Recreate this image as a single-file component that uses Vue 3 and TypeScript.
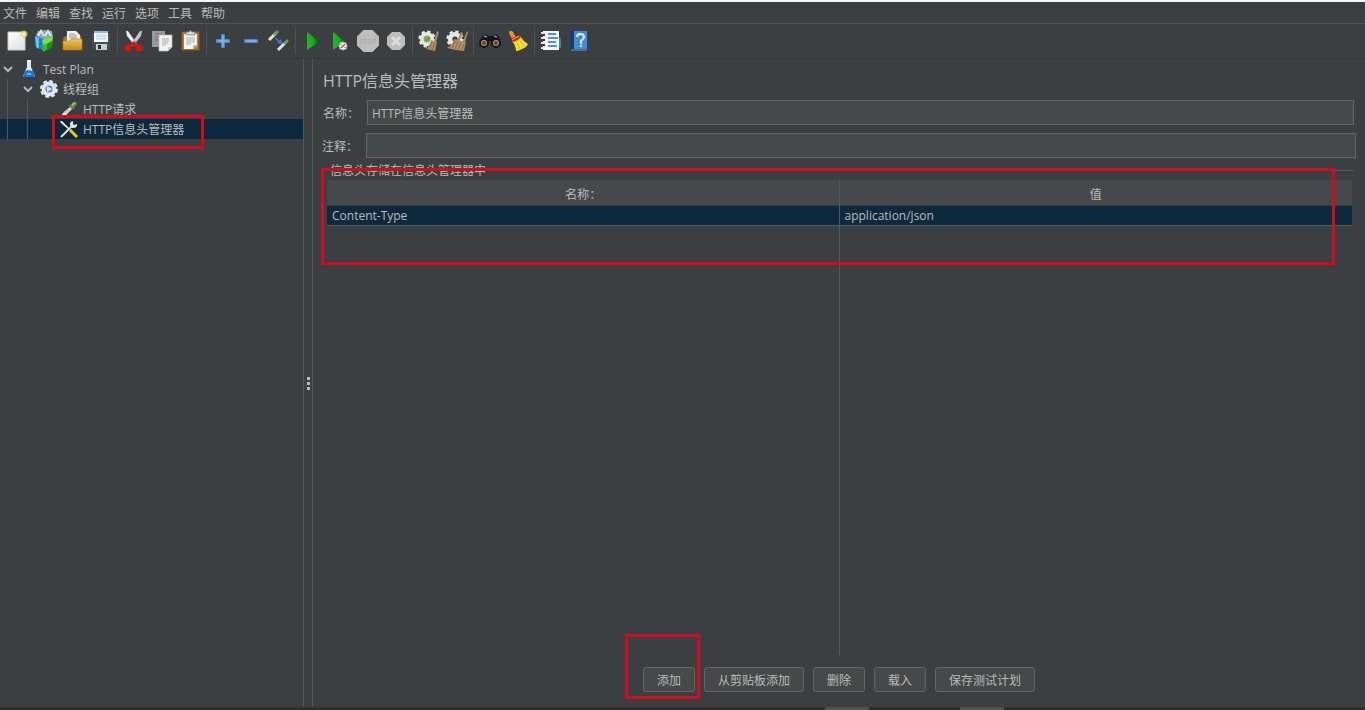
<script setup lang="ts">
import { ref } from 'vue'

interface Tool {
  icon: string
  label: string
  caption?: string
}

interface Header {
  name: string
  value: string
}

const menus: string[] = ['文件', '编辑', '查找', '运行', '选项', '工具', '帮助']

const toolGroups: Tool[][] = [
  [
    { icon: 'new', label: '新建' },
    { icon: 'templates', label: '模板' },
    { icon: 'open', label: '打开' },
    { icon: 'save', label: '保存' },
  ],
  [
    { icon: 'cut', label: '剪切' },
    { icon: 'copy', label: '复制' },
    { icon: 'paste', label: '粘贴' },
  ],
  [
    { icon: 'plus', label: '展开' },
    { icon: 'minus', label: '折叠' },
    { icon: 'toggle', label: '切换' },
  ],
  [
    { icon: 'start', label: '启动' },
    { icon: 'start-now', label: '不停顿开始' },
    { icon: 'stop', label: '停止', caption: 'STOP' },
    { icon: 'shutdown', label: '关闭' },
  ],
  [
    { icon: 'clear', label: '清除' },
    { icon: 'clear-all', label: '清除全部' },
  ],
  [
    { icon: 'search', label: '查找' },
    { icon: 'reset', label: '重置查找' },
  ],
  [
    { icon: 'functions', label: '函数助手' },
    { icon: 'help', label: '帮助' },
  ],
]

const title = 'HTTP信息头管理器'
const name = ref(title)
const comment = ref('')
const headers = ref<Header[]>([{ name: 'Content-Type', value: 'application/json' }])
const actions: string[] = ['从剪贴板添加', '删除', '载入', '保存测试计划']
</script>

<template>
  <div class="app">
    <svg class="defs" aria-hidden="true">
      <defs>
        <linearGradient id="gGreen" x1="0" y1="0" x2="1" y2="0">
          <stop offset="0" stop-color="#2fae2f" /><stop offset=".5" stop-color="#12b312" /><stop offset="1" stop-color="#075f0a" />
        </linearGradient>
        <linearGradient id="gFolder" x1="0" y1="0" x2="0" y2="1">
          <stop offset="0" stop-color="#f2c45a" /><stop offset="1" stop-color="#c98a16" />
        </linearGradient>
        <linearGradient id="gPaper" x1="0" y1="0" x2="1" y2="1">
          <stop offset="0" stop-color="#fff" /><stop offset="1" stop-color="#dcdcdc" />
        </linearGradient>
      </defs>
      <symbol id="i-new" viewBox="0 0 24 24">
        <path d="M3 3h17v18H3z" fill="url(#gPaper)" stroke="#c9c9c5" />
        <circle cx="19" cy="5" r="3.500" fill="#e8d56b" opacity=".75" />
        <circle cx="19" cy="5" r="1.500" fill="#fffbd0" />
      </symbol>
      <symbol id="i-templates" viewBox="0 0 24 24">
        <path d="M3 6l2-4 5-1 9 1 1 6-9 4z" fill="#8fa9a8" />
        <path d="M5 7l3-5 3 5M12 7l3-5 3 5" fill="none" stroke="#dbe9ec" stroke-width="2" />
        <path d="M2 7l9 3v12l-8-4z" fill="#1687d8" /><path d="M2 7l4 1.500v11.500l-3-2z" fill="#55c5f5" />
        <path d="M7 10v10" stroke="#0b5da5" stroke-dasharray="2 2" />
        <path d="M9 11l11-3-1 10-9 5z" fill="#36bd20" /><path d="M9 11l11-3-1 4-8 4z" fill="#7fe04a" /><path d="M14 15l5-3v6l-5 4z" fill="#159415" />
      </symbol>
      <symbol id="i-open" viewBox="0 0 24 24">
        <path d="M2 9l3-2h15l1 4v8H3z" fill="#b17a17" />
        <path d="M6 2h9l4 4v8H6z" fill="#f5f5f5" /><path d="M8 5h6M8 7h8M8 9h8" stroke="#929292" />
        <path d="M2 12h7l2-2h10v10q0 1-1 1H3q-1 0-1-1z" fill="url(#gFolder)" stroke="#b87b12" stroke-width=".6" />
      </symbol>
      <symbol id="i-save" viewBox="0 0 24 24">
        <path d="M3 4h18v17H5l-2-2z" fill="#454c53" /><path d="M5 2h14v11H5z" fill="#f5f9fc" />
        <path d="M5 2h14v2H5z" fill="#8ebbdb" /><path d="M7 6h10M7 8h10M7 10h10" stroke="#b5cde0" />
        <path d="M7 15h11v6H7z" fill="#c9ced2" /><path d="M9 16h3v4H9z" fill="#252b30" />
      </symbol>
      <symbol id="i-cut" viewBox="0 0 24 24">
        <path d="M4 2q2-1 4 3l7 10-2 2L5 7z" fill="#f0f0f0" /><path d="M20 2q-2-1-4 3L9 15l2 2 8-10z" fill="#c4c4c4" />
        <g fill="none" stroke="#d81313" stroke-width="3"><circle cx="6" cy="19" r="2" /><circle cx="17" cy="19" r="2" /><path d="M8 17l4-3 3 3" /></g>
      </symbol>
      <symbol id="i-copy" viewBox="0 0 24 24">
        <path d="M2 2h13v16H2z" fill="#999" /><path d="M5 5h7M5 8h5M5 11h4" stroke="#747474" />
        <path d="M9 6h13v12l-4 4H9z" fill="#f1f1f1" stroke="#bbb" stroke-width=".7" />
        <path d="M12 10h7M12 12h7M12 14h6M12 16h4" stroke="#aaa" /><path d="M18 22v-4h4z" fill="#c7c7c7" />
      </symbol>
      <symbol id="i-paste" viewBox="0 0 24 24">
        <path d="M4 3h17v18H4z" fill="#b57a26" stroke="#8d5912" /><path d="M6 5h13v11l-4 4H6z" fill="#f7f7f7" />
        <path d="M8 9h9M8 11h9M8 13h9M8 15h5" stroke="#a8a8a8" /><path d="M8 3h3q1-3 3 0h3v3H8z" fill="#d5d7d2" stroke="#737872" stroke-width=".7" />
        <path d="M15 20v-4h4z" fill="#bcbcbc" />
      </symbol>
      <symbol id="i-plus" viewBox="0 0 24 24">
        <path d="M11 6h2v5h5v2h-5v5h-2v-5H6v-2h5z" fill="#c2dcfb" stroke="#5f9be2" stroke-width="1.500" />
      </symbol>
      <symbol id="i-minus" viewBox="0 0 24 24"><path d="M6 11h12v2H6z" fill="#c2dcfb" stroke="#5f9be2" stroke-width="1.500" /></symbol>
      <symbol id="i-toggle" viewBox="0 0 24 24">
        <path d="M2 11l7-7" stroke="#e2e2dc" stroke-width="3" /><path d="M7 6l4-4" stroke="#6da04d" stroke-width="3" />
        <path d="M11 21l7-7" stroke="#e2e2dc" stroke-width="3" /><path d="M17 15l4-4" stroke="#6da04d" stroke-width="3" />
        <path d="M8 9l5 4" stroke="#3d7fd0" stroke-width="1.500" /><path d="M15 15l-5-1 4-4z" fill="#3d7fd0" />
      </symbol>
      <symbol id="i-start" viewBox="0 0 24 24"><path d="M7 3l12 10L7 21z" fill="url(#gGreen)" /></symbol>
      <symbol id="i-start-now" viewBox="0 0 24 24">
        <path d="M5 3l12 10L5 21z" fill="url(#gGreen)" />
        <circle cx="15" cy="17" r="4" fill="#f5f6fa" stroke="#9eacc4" /><path d="M13 19l4-4" stroke="#d33d32" stroke-width="1.500" /><path d="M13 15v1M17 18v1" stroke="#345b9b" />
      </symbol>
      <symbol id="i-stop" viewBox="0 0 24 24">
        <path d="M7.500 1h9L23 7.500v9L16.500 23h-9L1 16.500v-9z" fill="#bdbdbd" />
      </symbol>
      <symbol id="i-shutdown" viewBox="0 0 24 24">
        <path d="M8 3h8l5 5v8l-5 5H8l-5-5V8z" fill="#bdbdbd" /><path d="M8 8l8 8M16 8l-8 8" stroke="#dedede" stroke-width="3" />
      </symbol>
      <symbol id="i-gear" viewBox="0 0 24 24">
        <circle cx="12" cy="12" r="10" fill="none" stroke="#e5e7e4" stroke-width="3" stroke-dasharray="4.500 3.354" />
        <circle cx="12" cy="12" r="6.500" fill="none" stroke="#e5e7e4" stroke-width="6" />
      </symbol>
      <symbol id="i-clear" viewBox="0 0 24 24">
        <use href="#i-gear" x="1" y="1" width="18" height="18" /><circle cx="10" cy="10" r="3.500" fill="#7fae5a" /><path d="M9 12q1-3 4-3" fill="none" stroke="#4f8a2c" />
        <path d="M20 2l2 1-3 10-2-1z" fill="#a98b65" /><path d="M14 11l6 2-2 9-9-2q4-3 5-9z" fill="#b08e64" />
        <path d="M15 13l-3 7M18 14l-3 7" stroke="#8a6c48" />
      </symbol>
      <symbol id="i-clear-all" viewBox="0 0 24 24">
        <use href="#i-gear" x="1" y="1" width="18" height="18" />
        <path d="M16 3l2 1-4 9-2-1zM22 2l1 1-3 10-2-1z" fill="#a98b65" />
        <path d="M9 10l12 3-2 9-8-1-9-2q6-3 7-9z" fill="#b08e64" />
        <path d="M10 12l-3 7M13 13l-3 7M16 14l-3 7M19 15l-2 6" stroke="#8a6c48" />
      </symbol>
      <symbol id="i-search" viewBox="0 0 24 24">
        <path d="M4 8l3-3 4 2h3l4-2 3 3 2 8h-7l-2-4h-4l-2 4H1z" fill="#11161b" /><path d="M6 7l3 1M16 7l3 1" stroke="#8796a4" stroke-width="1.500" />
        <circle cx="6" cy="14" r="4" fill="#8f7767" stroke="#151515" stroke-width="2" /><circle cx="18" cy="14" r="4" fill="#8f7767" stroke="#151515" stroke-width="2" />
        <circle cx="6" cy="14" r="2.500" fill="#4a4a50" stroke="#c08a5a" /><circle cx="18" cy="14" r="2.500" fill="#4a4a50" stroke="#c08a5a" />
      </symbol>
      <symbol id="i-reset" viewBox="0 0 24 24">
        <path d="M3 4q0-3 3-2 2 1 2 3l2 3-4 2z" fill="#d99724" /><path d="M6 12q5 0 8-5 3 5 8 8-2 4-6 5-3 2-6 2 0-5-4-10z" fill="#f3dd35" />
        <path d="M5 10l7-4 3 2q-3 4-8 5z" fill="#ce241c" /><path d="M6 11l7-4" stroke="#f0b45a" /><path d="M11 14l3 6M14 12l5 6" stroke="#d6b51c" />
      </symbol>
      <symbol id="i-functions" viewBox="0 0 24 24">
        <path d="M20 9h2v10h-2z" fill="#287eae" /><path d="M20 12h2v5h-2z" fill="#32a252" />
        <path d="M4 2h16v19H4z" fill="#f7f8fa" /><path d="M9 5h8M9 9h10M9 13h8M9 17h9" stroke="#5b91d8" stroke-width="2" />
        <path d="M2 4h4M2 9h4M2 14h4M2 19h4" stroke="#e5e5e5" stroke-width="2" /><path d="M4 6h2M4 11h2M4 16h2" stroke="#343434" stroke-width="2" />
      </symbol>
      <symbol id="i-help" viewBox="0 0 24 24">
        <path d="M3 2h17v20H3z" fill="#173a66" /><path d="M7 2h13v18H7z" fill="#4389dc" /><path d="M4 21h16" stroke="#7da5cf" />
        <path d="M10 8q0-3 3-3 4 0 4 3 0 2-3 4v3" fill="none" stroke="#e8f1fb" stroke-width="2" /><path d="M13 16h2v2h-2z" fill="#e8f1fb" />
      </symbol>
      <symbol id="i-flask" viewBox="0 0 20 20">
        <path d="M8 2h4v6l4 9q0 1-1 1H5q-1 0-1-1l4-9z" fill="#d9e8f4" /><path d="M6 12l3-1 5 1 2 5q0 1-1 1H5q-1 0-1-1z" fill="#1d75d8" /><path d="M8 2h4" stroke="#eff7fc" stroke-width="2" /><path d="M8 14h4v2H8z" fill="#65b9fa" />
      </symbol>
      <symbol id="i-threads" viewBox="0 0 20 20">
        <circle cx="10" cy="10" r="8" fill="none" stroke="#dfe6f0" stroke-width="2" stroke-dasharray="3.800 2.483" />
        <circle cx="10" cy="10" r="5.500" fill="#5c80b4" stroke="#dfe6f0" stroke-width="4" /><path d="M8 7l5 3-5 3z" fill="#d9ebff" />
      </symbol>
      <symbol id="i-dropper" viewBox="0 0 20 20">
        <path d="M2 17l3-4 6-5 2 2-6 6z" fill="#eef0ec" /><path d="M6 14l5-4" stroke="#8e9892" /><path d="M9 6l3 0 2-3q4-1 4 2l-3 4v2z" fill="#559344" /><path d="M13 6l3-2" stroke="#9fd184" stroke-width="1.500" />
      </symbol>
      <symbol id="i-tools" viewBox="0 0 20 20">
        <path d="M2 18L14 6" stroke="#d8dce0" stroke-width="2" /><path d="M18 5a3.500 3.500 0 1 1-4-3v3l1 1z" fill="#e5e8eb" />
        <path d="M1 2l2 0 8 8-1 1-8-7z" fill="#eee" /><path d="M11 11l7 7" stroke="#ebc820" stroke-width="3" />
      </symbol>
    </svg>

    <nav class="menubar">
      <button v-for="m in menus" :key="m" type="button">{{ m }}</button>
    </nav>

    <div class="toolbar" role="toolbar">
      <div v-for="(group, i) in toolGroups" :key="i" class="group">
        <button v-for="t in group" :key="t.icon" type="button" :aria-label="t.label">
          <svg viewBox="0 0 24 24">
            <use :href="'#i-' + t.icon" width="24" height="24" />
            <text v-if="t.caption" x="12" y="15" text-anchor="middle">{{ t.caption }}</text>
          </svg>
        </button>
      </div>
    </div>

    <div class="body">
      <aside class="tree">
        <div class="node">
          <svg class="chev" viewBox="0 0 10 10"><path d="M1 3l4 4 4-4" /></svg>
          <svg class="ico"><use href="#i-flask" /></svg>
          <span>Test Plan</span>
        </div>
        <div class="node level1">
          <svg class="chev" viewBox="0 0 10 10"><path d="M1 3l4 4 4-4" /></svg>
          <svg class="ico"><use href="#i-threads" /></svg>
          <span>线程组</span>
        </div>
        <div class="node level2">
          <svg class="ico"><use href="#i-dropper" /></svg>
          <span>HTTP请求</span>
        </div>
        <div class="node level2 selected">
          <svg class="ico"><use href="#i-tools" /></svg>
          <span>HTTP信息头管理器</span>
          <i class="mark mark-node"></i>
        </div>
      </aside>

      <div class="splitter"><i></i><i></i><i></i></div>

      <main class="panel">
        <h1>{{ title }}</h1>
        <div class="field name">
          <label for="name">名称：</label>
          <input id="name" v-model="name" type="text" />
        </div>
        <div class="field comment">
          <label for="comment">注释：</label>
          <input id="comment" v-model="comment" type="text" />
        </div>

        <fieldset>
          <legend>信息头存储在信息头管理器中</legend>
          <div class="grid">
            <table>
              <thead>
                <tr><th>名称：</th><th>值</th></tr>
              </thead>
              <tbody>
                <tr v-for="h in headers" :key="h.name">
                  <td>{{ h.name }}</td>
                  <td>{{ h.value }}</td>
                </tr>
              </tbody>
            </table>
            <i class="mark mark-table"></i>
          </div>
        </fieldset>

        <div class="actions">
          <div class="marked">
            <button type="button">添加</button>
            <i class="mark mark-add"></i>
          </div>
          <button v-for="a in actions" :key="a" type="button">{{ a }}</button>
        </div>
      </main>
    </div>

    <footer class="strip"><i></i><i></i></footer>
  </div>
</template>

<style>
html,
body {
  margin: 0;
  background: #3c3f41;
}
</style>

<style scoped>
.app {
  display: flex;
  flex-direction: column;
  height: 100vh;
  box-sizing: border-box;
  border-top: 2px solid #f4f4f4;
  overflow: hidden;
  background: #3c3f41;
  color: #bbbbbb;
  font: 12px/20px "Open Sans", "Noto Sans CJK SC", sans-serif;
}

button,
input {
  font: inherit;
  color: inherit;
}

.defs {
  position: absolute;
  width: 0;
  height: 0;
}

.menubar {
  display: flex;
  flex: none;
  height: 21px;
  gap: 9px;
  padding-left: 3px;
  border-bottom: 1px solid #515354;
}

.menubar button {
  padding: 2px 0 0;
  border: 0;
  background: none;
  line-height: 18px;
}

.toolbar {
  display: flex;
  flex: none;
  align-items: center;
  height: 34px;
  padding-left: 3px;
  border-bottom: 1px solid #353839;
}

.group {
  display: flex;
}

.group + .group {
  margin-left: 2px;
  padding-left: 2px;
  border-left: 1px solid #515354;
}

.group button {
  display: flex;
  align-items: center;
  justify-content: center;
  width: 28px;
  height: 26px;
  padding: 0;
  border: 0;
  background: none;
}

.group svg {
  width: 24px;
  height: 24px;
}

.group text {
  fill: #adadad;
  font-size: 7px;
  font-weight: 700;
}

.body {
  display: flex;
  flex: 1;
  min-height: 0;
}

.tree {
  flex: none;
  width: 303px;
}

.node {
  position: relative;
  display: flex;
  align-items: center;
  height: 20px;
  padding-left: 3px;
  white-space: nowrap;
}

.node span {
  line-height: 18px;
  padding-top: 2px;
}

.chev {
  width: 10px;
  height: 10px;
  margin-right: 6px;
  fill: none;
  stroke: #b4b6b7;
  stroke-width: 2;
}

.ico {
  width: 20px;
  height: 20px;
  margin-right: 4px;
}

.level1 {
  padding-left: 23px;
}

.level2 {
  padding-left: 59px;
}

.level1::before,
.level2::before {
  content: "";
  position: absolute;
  top: 0;
  bottom: 0;
  left: 7px;
  width: 21px;
  box-sizing: border-box;
  border-left: 1px solid #55585a;
}

.level2::before {
  border-right: 1px solid #55585a;
}

.selected {
  background: #0d293e;
}

.mark {
  position: absolute;
  z-index: 2;
  box-sizing: border-box;
  border: 3px solid #d00d20;
  pointer-events: none;
}

.mark-node {
  top: -4px;
  left: 52px;
  width: 152px;
  height: 34px;
}

.splitter {
  display: flex;
  flex: none;
  flex-direction: column;
  align-items: center;
  justify-content: center;
  gap: 2px;
  width: 8px;
  border: solid #555859;
  border-width: 0 1px;
}

.splitter i {
  width: 3px;
  height: 3px;
  background: #b9bbbc;
}

.panel {
  display: flex;
  flex: 1;
  flex-direction: column;
  min-width: 0;
  padding: 10px 9px 15px;
}

h1 {
  margin: 0 0 7px;
  font-size: 16px;
  font-weight: 400;
  line-height: 24px;
  padding-left: 1px;
}

.field {
  display: flex;
  align-items: center;
}

.field label {
  flex: none;
  width: 44px;
  padding-top: 2px;
}

.field input {
  flex: 1;
  min-width: 0;
  height: 25px;
  box-sizing: border-box;
  padding: 0 4px;
  border: 1px solid #646666;
  border-radius: 0;
  background: #45494a;
  outline: none;
}

.name {
  padding: 0 2px 0 1px;
}

.comment {
  margin-top: 8px;
}

fieldset {
  display: flex;
  flex: 1;
  min-width: 0;
  min-height: 0;
  margin: 3px 2px 0 0;
  padding: 1px 2px 0 5px;
  border: 0;
  border-top: 1px solid #555859;
}

legend {
  margin-left: 2px;
  padding: 2px 1px 0;
  line-height: 16px;
}

.mark-table {
  top: -12px;
  left: -6px;
  right: 17px;
  height: 97px;
}

.grid {
  position: relative;
  flex: 1;
}

.grid::after {
  content: "";
  position: absolute;
  top: 0;
  right: 50%;
  bottom: 0;
  border-left: 1px solid #55585a;
}

table {
  width: 100%;
  table-layout: fixed;
  border-collapse: collapse;
}

th {
  height: 20px;
  padding: 5px 0 0;
  border-bottom: 1px solid #383c3e;
  background: #45494a;
  font-weight: 400;
}

td {
  height: 19px;
  padding: 0 5px;
  border-bottom: 1px solid #55585a;
  background: #0d293e;
  line-height: 19px;
}

.actions {
  display: flex;
  flex: none;
  justify-content: center;
  gap: 9px;
  margin-top: 12px;
}

.actions button {
  height: 25px;
  padding: 2px 13px 0;
  border: 1px solid #646768;
  border-radius: 3px;
  background: #45494a;
  line-height: 20px;
}

.marked {
  position: relative;
  display: flex;
}

.mark-add {
  top: -33px;
  left: -18px;
  right: -5px;
  bottom: -7px;
}

.strip {
  display: flex;
  flex: none;
  gap: 91px;
  height: 3px;
  padding-left: 825px;
  background: #352d2c;
}

.strip i {
  width: 44px;
  background: #55504e;
}
</style>
